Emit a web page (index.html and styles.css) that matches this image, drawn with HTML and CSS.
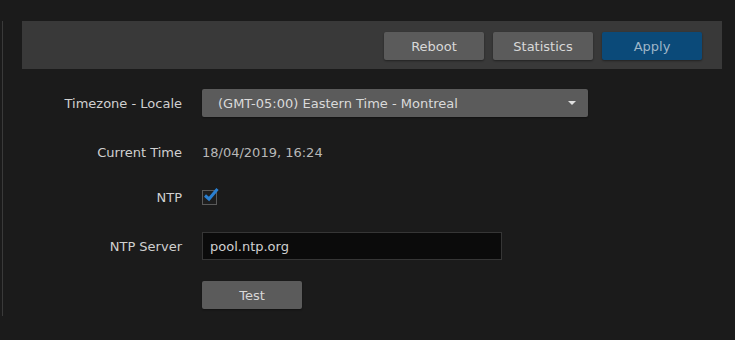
FILE: index.html
```html
<!DOCTYPE html>
<html lang="en">
<head>
    <meta charset="UTF-8">
    <title>Time Settings</title>
    <link rel="stylesheet" href="styles.css">
</head>
<body>
    <div class="page">
        <div class="toolbar">
            <button class="btn">Reboot</button>
            <button class="btn">Statistics</button>
            <button class="btn btn-primary">Apply</button>
        </div>

        <div class="form">
            <div class="form-row">
                <label class="form-label">Timezone - Locale</label>
                <div class="select">
                    <span>(GMT-05:00) Eastern Time - Montreal</span>
                    <span class="caret"></span>
                </div>
            </div>
            <div class="form-row">
                <label class="form-label">Current Time</label>
                <span class="form-value">18/04/2019, 16:24</span>
            </div>
            <div class="form-row row-short">
                <label class="form-label">NTP</label>
                <span class="checkbox">
                    <svg width="18" height="16" viewBox="0 0 18 16">
                        <path d="M3 8.5 L7 12 L15.5 2" fill="none" stroke="#2a7fd0" stroke-width="3"/>
                    </svg>
                </span>
            </div>
            <div class="form-row">
                <label class="form-label">NTP Server</label>
                <div class="input">pool.ntp.org</div>
            </div>
            <div class="form-row">
                <span class="form-label"></span>
                <button class="btn">Test</button>
            </div>
        </div>
    </div>
</body>
</html>
```

FILE: styles.css
```css
* {
    margin: 0;
    padding: 0;
    box-sizing: border-box;
}

body {
    font-family: 'DejaVu Sans', Verdana, sans-serif;
    font-size: 13px;
    background-color: #1b1b1b;
    color: #cfcfcf;
}

.page {
    margin: 21px 0 0 2px;
    height: 295px;
    border-left: 1px solid #3a3a3a;
    padding-left: 19px;
}

.toolbar {
    width: 700px;
    height: 48px;
    background-color: #393939;
    display: flex;
    justify-content: flex-end;
    align-items: flex-start;
    gap: 9px;
    padding: 11px 20px 0 0;
}

.btn {
    width: 100px;
    height: 28px;
    border: none;
    border-radius: 2px;
    background-color: #5b5b5b;
    color: #d8d8d8;
    font-family: inherit;
    font-size: 13px;
    box-shadow: 0 1px 2px rgba(0,0,0,0.4);
}

.btn-primary {
    background-color: #0b4a79;
    color: #9fb6c8;
}

.form {
    margin-top: 20px;
    display: flex;
    flex-direction: column;
    gap: 21px;
}

.form-row {
    display: flex;
    align-items: center;
    height: 28px;
}

.row-short {
    height: 20px;
    margin-bottom: 4px;
}

.form-label {
    width: 160px;
    margin-right: 20px;
    text-align: right;
    color: #d0d0d0;
}

.form-value {
    color: #b8b8b8;
}

.select {
    width: 386px;
    height: 28px;
    background-color: #5b5b5b;
    border-radius: 2px;
    box-shadow: 0 1px 2px rgba(0,0,0,0.4);
    display: flex;
    align-items: center;
    justify-content: space-between;
    padding: 0 12px 0 16px;
    color: #dadada;
}

.caret {
    width: 0;
    height: 0;
    border-left: 4px solid transparent;
    border-right: 4px solid transparent;
    border-top: 4px solid #e0e0e0;
}

.checkbox {
    position: relative;
    width: 15px;
    height: 15px;
    border: 1px solid #5a5a5a;
    background-color: #1e1e1e;
}

.checkbox svg {
    position: absolute;
    left: -1px;
    top: -4px;
}

.input {
    width: 300px;
    height: 28px;
    background-color: #0b0b0b;
    border: 1px solid #363636;
    padding: 0 7px;
    display: flex;
    align-items: center;
    color: #d0d0d0;
}
```
